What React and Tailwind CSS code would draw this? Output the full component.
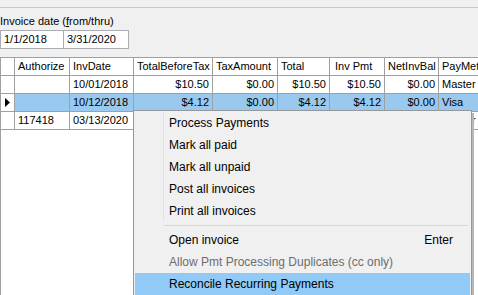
import React from 'react';

const COLS = [
    { key: 'hdr', w: 14 },
    { key: 'auth', w: 55, title: 'Authorize' },
    { key: 'date', w: 64, title: 'InvDate' },
    { key: 'tbt', w: 79, title: 'TotalBeforeTax', right: true },
    { key: 'tax', w: 65, title: 'TaxAmount', right: true },
    { key: 'total', w: 52, title: 'Total', right: true },
    { key: 'pmt', w: 55, title: 'Inv Pmt', right: true },
    { key: 'bal', w: 54, title: 'NetInvBal', right: true },
    { key: 'pay', w: 60, title: 'PayMet' },
];

const ROWS = [
    { auth: '', date: '10/01/2018', tbt: '$10.50', tax: '$0.00', total: '$10.50', pmt: '$10.50', bal: '$0.00', pay: 'Master' },
    { auth: '', date: '10/12/2018', tbt: '$4.12', tax: '$0.00', total: '$4.12', pmt: '$4.12', bal: '$0.00', pay: 'Visa', selected: true },
    { auth: '117418', date: '03/13/2020', tbt: '', tax: '', total: '', pmt: '', bal: '', pay: 'Master' },
];

const MENU = [
    { label: 'Process Payments' },
    { label: 'Mark all paid' },
    { label: 'Mark all unpaid' },
    { label: 'Post all invoices' },
    { label: 'Print all invoices' },
    { sep: true },
    { label: 'Open invoice', shortcut: 'Enter' },
    { label: 'Allow Pmt Processing Duplicates (cc only)', disabled: true },
    { label: 'Reconcile Recurring Payments', hover: true },
];

const RowArrow = () => (
    <svg width="5" height="9" viewBox="0 0 5 9" className="block">
        <path d="M0 0 L5 4.5 L0 9 Z" fill="#000" />
    </svg>
);

const GridRow = ({ row, header }) => (
    <div className={`flex h-[18px] border-b border-[#a0a0a0] ${row && row.selected ? '' : 'bg-white'}`}>
        {COLS.map((c, i) => {
            const last = i === COLS.length - 1;
            let content = null;
            let cls = 'pl-[3px] justify-start';
            if (c.key === 'hdr') {
                cls = 'justify-center';
                if (row && row.selected) content = <RowArrow />;
            } else if (header) {
                content = c.title;
                cls = c.key === 'pmt' ? 'pl-[5px] justify-start' : 'pl-[3px] justify-start';
            } else {
                content = row[c.key];
                if (c.right) cls = 'pr-[3px] justify-end';
            }
            const sel = row && row.selected && c.key !== 'hdr';
            return (
                <div
                    key={c.key}
                    style={last ? undefined : { width: c.w }}
                    className={`flex items-center shrink-0 overflow-hidden whitespace-nowrap ${cls} ${last ? 'flex-1' : 'border-r border-[#a0a0a0]'} ${sel ? 'bg-[#99c9ef]' : 'bg-white'}`}
                >
                    {content}
                </div>
            );
        })}
    </div>
);

export default function App() {
    return (
        <div
            className="relative w-[478px] h-[295px] overflow-hidden bg-[#f0f0f0] text-black text-[11px] leading-none"
            style={{ fontFamily: '"Liberation Sans", Arial, sans-serif' }}
        >
            <div className="h-[8px] border-b border-[#c9c9c9]" />

            <div className="pt-[8px] h-[21px]">Invoice date (<span className="underline">f</span>rom/thru)</div>

            <div className="flex mt-[1px]">
                <div className="w-[64px] h-[19px] bg-white border border-[#abadb3] flex items-center pl-[3px]">1/1/2018</div>
                <div className="w-[65px] h-[19px] bg-white border border-l-0 border-[#abadb3] flex items-center pl-[3px]">3/31/2020</div>
            </div>

            <div className="mt-[8px] border-t border-l border-[#a0a0a0] bg-white h-[240px]">
                <GridRow header />
                {ROWS.map((r, i) => (
                    <GridRow key={i} row={r} />
                ))}
            </div>

            {/* context menu */}
            <div className="absolute left-[133px] top-[110px] w-[341px] h-[190px] flex">
                <div className="relative w-[339px] h-full bg-[#f0f0f0] border border-[#979797] text-[12px] pt-[1px] px-[1px]">
                    <div className="absolute left-[29px] top-[1px] h-[110px] w-px bg-[#e2e2e2]" />
                    {MENU.map((m, i) =>
                        m.sep ? (
                            <div key={i} className="h-[7px] flex items-center pl-[29px] pr-[2px]">
                                <div className="h-px w-full bg-[#d7d7d7]" />
                            </div>
                        ) : (
                            <div
                                key={i}
                                className={`relative h-[22px] flex items-center justify-between pl-[34px] pr-[17px] ${m.hover ? 'bg-[#91c9f7]' : ''} ${m.disabled ? 'text-[#6d6d6d]' : ''}`}
                            >
                                <span>{m.label}</span>
                                {m.shortcut && <span>{m.shortcut}</span>}
                            </div>
                        )
                    )}
                </div>
                <div className="w-[2px] mt-[3px] bg-[#b8b8b8]" />
            </div>
        </div>
    );
}
